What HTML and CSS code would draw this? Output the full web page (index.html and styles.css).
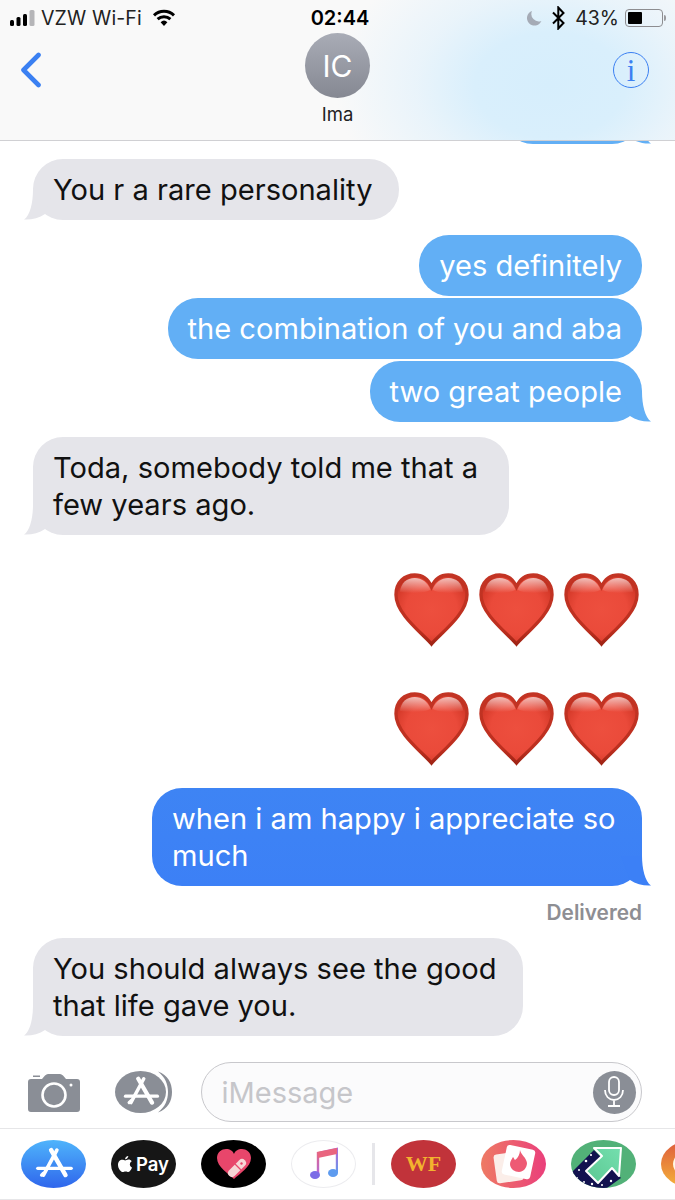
FILE: index.html
```html
<!DOCTYPE html>
<html lang="en">
<head>
<meta charset="utf-8">
<title>Messages</title>
<link rel="stylesheet" href="styles.css">
</head>
<body>
<svg class="defs" width="0" height="0" aria-hidden="true">
  <defs>
    <radialGradient id="hf" cx="50%" cy="50%" r="58%">
      <stop offset="0" stop-color="#ed4f3e"/><stop offset=".62" stop-color="#ea4a3a"/><stop offset=".9" stop-color="#d63a2a"/><stop offset="1" stop-color="#b92c1c"/>
    </radialGradient>
    <linearGradient id="hs" x1="0" y1="0" x2="0" y2="1">
      <stop offset="0" stop-color="#c23424"/><stop offset=".8" stop-color="#bd2f1f"/><stop offset="1" stop-color="#a02415"/>
    </linearGradient>
    <linearGradient id="hh" x1="0" y1="0" x2="0" y2="1">
      <stop offset="0" stop-color="#fff" stop-opacity=".68"/><stop offset="1" stop-color="#fff" stop-opacity="0"/>
    </linearGradient>
    <linearGradient id="mu" x1="0" y1="0" x2="1" y2="1">
      <stop offset="0" stop-color="#e9657f"/><stop offset=".5" stop-color="#b36bd6"/><stop offset="1" stop-color="#5e9bef"/>
    </linearGradient>
    <linearGradient id="mint" x1="1" y1="0" x2="0" y2="1">
      <stop offset="0" stop-color="#74dfae"/><stop offset="1" stop-color="#5cc893"/>
    </linearGradient>
    <symbol id="heart" viewBox="0 0 76 74">
      <path d="M38 72C30 62 2 42 2 22 2 9 11 2 21 2c8 0 14 5 17 12C41 7 47 2 55 2c10 0 19 7 19 20 0 20-28 40-36 50Z" fill="url(#hf)" stroke="url(#hs)" stroke-width="3.400"/>
      <path d="M21 5c7 0 13 4 16 12-6 4-22 4-31 2C7 10 13 5 21 5Z" fill="url(#hh)"/>
      <path d="M55 5c-7 0-13 4-16 12 6 4 22 4 31 2C69 10 63 5 55 5Z" fill="url(#hh)"/>
    </symbol>
    <symbol id="astore" viewBox="0 0 48 36">
      <g fill="none" stroke="#fff" stroke-width="3.800" stroke-linecap="round">
        <path d="M27 3 13 29"/><path d="M21 3 36 29" stroke-width="4.600"/><path d="M7 22h35" stroke-width="3.400"/><path d="M11 29l2-2" stroke-width="3.400"/>
      </g>
    </symbol>
  </defs>
</svg>

<div class="phone">
  <header class="header">
    <div class="status">
      <div class="status-left">
        <svg class="signal" width="26" height="16" viewBox="0 0 26 16"><rect x="0" y="10" width="4" height="6" rx="1.500" fill="#000"/><rect x="6.500" y="7" width="4" height="9" rx="1.500" fill="#000"/><rect x="13" y="4" width="4" height="12" rx="1.500" fill="#000"/><rect x="19.500" y="0" width="5" height="16" rx="1.500" fill="#b5b5b8"/></svg>
        <span class="carrier">VZW Wi-Fi</span>
        <svg class="wifi" width="24" height="17" viewBox="0 0 24 17"><path d="M12 17 8.600 13.200a5 5 0 0 1 6.800 0Z" fill="#000"/><path d="M5.600 10.200a9.400 9.400 0 0 1 12.800 0M2 6.300a14.600 14.600 0 0 1 20 0" fill="none" stroke="#000" stroke-width="3"/></svg>
      </div>
      <div class="clock">02:44</div>
      <div class="status-right">
        <svg class="moon" width="16" height="16" viewBox="0 0 16 16"><path d="M6 1a7.500 7.500 0 1 0 9.400 10A7.500 7.500 0 0 1 6 1Z" fill="#a5abb6"/></svg>
        <svg class="bt" width="13" height="24" viewBox="0 0 13 24"><path d="M1 6.500 11.500 17 6.300 22.500V1.500L11.500 7 1 17.500" fill="none" stroke="#000" stroke-width="2"/></svg>
        <span class="pct">43%</span>
        <div class="battery"><div class="battery-fill"></div></div>
        <div class="battery-nub"></div>
      </div>
    </div>
    <nav class="nav">
      <svg class="back" width="22" height="36" viewBox="0 0 22 36"><path d="M18.500 3 3.500 18l15 15" fill="none" stroke="#3b80f2" stroke-width="4.600" stroke-linecap="round" stroke-linejoin="round"/></svg>
      <div class="contact">
        <div class="avatar">IC</div>
        <div class="name">Ima</div>
      </div>
      <div class="info"><span class="info-i">i</span></div>
    </nav>
  </header>

  <main class="thread">
    <div class="clip">
      <div class="bubble sent light clipped">
        <svg class="tail tail-r" width="30" height="30" viewBox="0 0 30 30"><path d="M21 0C21 12 24 26 30 29.500 23 30 15 28 9 24L0 0Z"/></svg>
      </div>
    </div>
    <div class="bubble recv gap-lg"><span>You r a rare personality</span>
      <svg class="tail tail-l" width="30" height="30" viewBox="0 0 30 30"><path d="M21 0C21 12 24 26 30 29.500 23 30 15 28 9 24L0 0Z"/></svg>
    </div>
    <div class="bubble sent light gap-lg"><span>yes definitely</span></div>
    <div class="bubble sent light gap-sm"><span>the combination of you and aba</span></div>
    <div class="bubble sent light gap-sm"><span>two great people</span>
      <svg class="tail tail-r" width="30" height="30" viewBox="0 0 30 30"><path d="M21 0C21 12 24 26 30 29.500 23 30 15 28 9 24L0 0Z"/></svg>
    </div>
    <div class="bubble recv wide gap-lg"><span>Toda, somebody told me that a few years ago.</span>
      <svg class="tail tail-l" width="30" height="30" viewBox="0 0 30 30"><path d="M21 0C21 12 24 26 30 29.500 23 30 15 28 9 24L0 0Z"/></svg>
    </div>
    <div class="hearts hearts-first">
      <svg class="heart"><use href="#heart"/></svg><svg class="heart"><use href="#heart"/></svg><svg class="heart"><use href="#heart"/></svg>
    </div>
    <div class="hearts hearts-second">
      <svg class="heart"><use href="#heart"/></svg><svg class="heart"><use href="#heart"/></svg><svg class="heart"><use href="#heart"/></svg>
    </div>
    <div class="bubble sent deep full gap-md"><span>when i am happy i appreciate so much</span>
      <svg class="tail tail-r" width="30" height="30" viewBox="0 0 30 30"><path d="M21 0C21 12 24 26 30 29.500 23 30 15 28 9 24L0 0Z"/></svg>
    </div>
    <div class="delivered">Delivered</div>
    <div class="bubble recv wider gap-rd"><span>You should always see the good that life gave you.</span>
      <svg class="tail tail-l" width="30" height="30" viewBox="0 0 30 30"><path d="M21 0C21 12 24 26 30 29.500 23 30 15 28 9 24L0 0Z"/></svg>
    </div>
  </main>

  <section class="composer">
    <svg class="camera" width="52" height="40" viewBox="0 0 52 40"><path d="M5 3.500h7V5H5Z" fill="#8a8e96"/><path d="M3 7h11l3-3.500c1-1 2-1.500 3-1.500h12c1 0 2 .5 3 1.500L38 7h11c2 0 3 1 3 3v27c0 2-1 3-3 3H3c-2 0-3-1-3-3V10c0-2 1-3 3-3Z" fill="#8a8e96"/><circle cx="26" cy="23" r="11.500" fill="none" stroke="#fff" stroke-width="2.600"/><circle cx="43" cy="13" r="1.500" fill="#fff"/></svg>
    <div class="apps-btn">
      <svg class="apps-arc" width="58" height="42" viewBox="0 0 58 42"><path d="M43 .5C53 4 57 12 57 21 57 30 53 38 43 41.500 50 36 53 29 53 21 53 13 50 6 43 .5Z" fill="#8a8e96"/></svg>
      <div class="apps-disc"><svg width="44" height="33"><use href="#astore"/></svg></div>
    </div>
    <div class="input">
      <span class="placeholder">iMessage</span>
      <div class="mic">
        <svg width="24" height="32" viewBox="0 0 24 32"><rect x="7" y="1" width="10" height="18" rx="5" fill="none" stroke="#fff" stroke-width="1.800"/><path d="M3 14c0 6 4 10 9 10s9-4 9-10M12 24v5M6 30h12" fill="none" stroke="#fff" stroke-width="1.800"/></svg>
      </div>
    </div>
  </section>

  <section class="tray">
    <div class="app app-store"><svg width="46" height="35"><use href="#astore"/></svg></div>
    <div class="app app-pay">
      <svg width="14" height="17" viewBox="0 0 14 17"><path d="M10.300 0c.1 1.300-1.300 3.300-3.200 3.200C7 1.700 8.600.2 10.300 0ZM7.200 4.400c.8 0 1.800-.8 3.300-.8 1.300 0 2.500.7 3.200 1.700-2.700 1.600-2.200 5.300.3 6.300-.6 1.700-2.100 4.400-3.600 4.400-1 0-1.500-.6-2.800-.6s-1.900.6-2.800.6C3 16 0 12.500 0 8.900 0 5.600 2.200 3.700 4.100 3.700c1.300 0 2.400.7 3.100.7Z" fill="#fff"/></svg>
      <span class="pay-text">Pay</span>
    </div>
    <div class="app app-heart">
      <svg width="34" height="30" viewBox="0 0 34 30"><path d="M17 30C12 25 0 18 0 9 0 3 5 0 9 0c4 0 7 2 8 5 1-3 4-5 8-5 4 0 9 3 9 9 0 9-12 16-17 21Z" fill="#e8466b"/><path d="m15 24 10-10" stroke="#f6d6d6" stroke-width="8" stroke-linecap="round"/><path d="m18 15 6 6" stroke="#e8466b" stroke-width="1.200"/><circle cx="24.500" cy="14.500" r="1.200" fill="#e8466b"/></svg>
    </div>
    <div class="app app-music">
      <svg width="28" height="34" viewBox="0 0 28 34"><path d="M8 27V6l19-4v24" fill="none" stroke="url(#mu)" stroke-width="2.400"/><path d="M8 5 27 1v6L8 11Z" fill="#e9657f"/><ellipse cx="5" cy="28" rx="5" ry="4" fill="#7c6de6"/><ellipse cx="23" cy="26" rx="5" ry="4" fill="#5e9bef"/></svg>
    </div>
    <div class="divider"></div>
    <div class="app app-wf"><span class="wf-text">WF</span></div>
    <div class="app app-tinder">
      <svg width="54" height="44" viewBox="0 0 54 44"><rect x="8" y="11" width="27" height="29" rx="3" fill="#fbeee9" transform="rotate(-8 21 25)"/><rect x="17" y="5" width="29" height="30" rx="3" fill="#fff" transform="rotate(12 31 20)"/><path d="M33 8c1 5 6 7 7 13 0 5-4 9-8 9s-9-3-9-8c0-3 2-5 3-7 1 1 1 2 2 3 3-2 5-6 5-10Z" fill="#ee5a74"/></svg>
    </div>
    <div class="app app-green">
      <svg width="65" height="48" viewBox="0 0 65 48"><path d="M0 33 23 10 50 38 36 48H0Z" fill="#12124f"/><path d="M50 8H23l8 8-16 15 12 12 14-15 7 8Z" fill="url(#mint)" stroke="#fff" stroke-width="2" stroke-linejoin="round"/><g fill="#fff"><circle cx="15" cy="21" r="1.300"/><circle cx="20" cy="15" r="1.100"/><circle cx="8" cy="30" r="1"/><circle cx="6" cy="38" r="1"/><circle cx="13" cy="42" r="1"/><circle cx="21" cy="44" r="1.200"/><circle cx="31" cy="45" r="1"/><circle cx="40" cy="41" r="1.200"/></g></svg>
    </div>
    <div class="app app-next"><div class="next-hole"></div></div>
  </section>
</div>
</body>
</html>
```

FILE: styles.css
```css
* { box-sizing: border-box; }
html, body { margin: 0; padding: 0; background: #fff; }
body { font-family: "Inter", "Liberation Sans", sans-serif; color: #000; }
.defs { position: absolute; }
.phone { width: 675px; height: 1200px; display: flex; flex-direction: column; overflow: hidden; background: #fff; }

/* Header */
.header {
  height: 141px; flex: none; border-bottom: 1px solid #d0d0d3;
  background:
    radial-gradient(ellipse 215px 150px at 550px 85px, #d6eefc 0%, #d9effc 35%, rgba(228,242,251,.75) 62%, rgba(249,249,249,0) 100%),
    #f9f9f9;
  display: flex; flex-direction: column;
}
.status { height: 33px; flex: none; display: grid; grid-template-columns: 1fr auto 1fr; align-items: center; padding: 2px 5px 0 10px; font-size: 19.500px; }
.status-left { display: flex; align-items: center; }
.carrier { margin-left: 5px; color: #222; letter-spacing: .15px; }
.wifi { margin-left: 10px; }
.clock { font-weight: 600; font-size: 20px; }
.status-right { display: flex; align-items: center; justify-content: flex-end; margin-right: 4px; }
.moon { margin-right: 10px; }
.bt { margin-right: 10px; }
.pct { color: #222; }
.battery { margin-left: 6px; width: 38px; height: 18px; border: 1.500px solid #8d8d90; border-radius: 4px; padding: 2px; }
.battery-fill { width: 43%; height: 100%; background: #000; border-radius: 1px; }
.battery-nub { width: 2px; height: 6px; background: #9a9a9d; border-radius: 0 2px 2px 0; margin-left: 1px; }

.nav { flex: 1; display: grid; grid-template-columns: 1fr auto 1fr; padding: 0 20px; }
.back { margin-top: 19px; }
.contact { display: flex; flex-direction: column; align-items: center; }
.avatar { width: 65px; height: 65px; border-radius: 50%; background: linear-gradient(#a9acb6, #858892); color: #fff; font-size: 30px; font-weight: 400; display: flex; align-items: center; justify-content: center; }
.name { margin-top: 4px; font-size: 18.500px; line-height: 24px; color: #222; }
.info { justify-self: end; margin: 19px 6px 0 0; width: 36px; height: 36px; border: 1.500px solid #3b80f2; border-radius: 50%; display: flex; align-items: center; justify-content: center; }
.info-i { font-family: "Liberation Serif", serif; font-size: 31px; line-height: 1; color: #3b80f2; }

/* Thread */
.thread { flex: 1; display: flex; flex-direction: column; padding: 0 33px; min-height: 0; }
.clip { height: 3px; flex: none; position: relative; display: flex; justify-content: flex-end; overflow: hidden; margin-right: -33px; padding-right: 33px; }
.clipped { width: 139px; height: 61px; margin-top: -58px; flex: none; }
.bubble { position: relative; padding: 12px 20px; border-radius: 30px; font-size: 29.100px; line-height: 37px; max-width: 490px; flex: none; }
.bubble > span { position: relative; z-index: 1; }
.recv { align-self: flex-start; background: #e5e5ea; color: #111; fill: #e5e5ea; padding-right: 26px; }
.sent { align-self: flex-end; color: #fff; }
.light { background: #62aff5; fill: #62aff5; }
.deep { background: linear-gradient(#3e84f4, #3c80f6); fill: #3c80f6; }
.wide { width: 476px; }
.wider { width: 490px; padding-right: 20px; }
.full { width: 490px; }
.gap-lg { margin-top: 15px; }
.gap-sm { margin-top: 2px; }
.gap-md { margin-top: 22px; }
.gap-rd { margin-top: 14px; }
.tail { position: absolute; bottom: 0; }
.tail-r { right: -9px; }
.tail-l { left: -9px; transform: scaleX(-1); }
.hearts { align-self: flex-end; display: flex; gap: 10px; margin-right: 3px; }
.hearts-first { margin-top: 37px; }
.hearts-second { margin-top: 44px; }
.heart { width: 75px; height: 75px; }
.delivered { align-self: flex-end; margin-top: 15px; font-size: 20.800px; line-height: 23px; font-weight: 600; color: #8e8e93; }

/* Composer */
.composer { flex: none; height: 67px; padding: 0 33px 6px 28px; display: flex; align-items: center; border-bottom: 1px solid #e6e6e8; }
.camera { flex: none; }
.apps-btn { position: relative; margin-left: 35px; width: 58px; height: 42px; flex: none; }
.apps-arc { position: absolute; left: 0; top: 0; }
.apps-disc { width: 51px; height: 42px; border-radius: 50%; background: #8a8e96; display: flex; align-items: center; justify-content: center; }
.input { margin-left: 28px; flex: 1; height: 60px; border: 1.500px solid #c8c8cc; border-radius: 30px; background: #fbfbfc; display: flex; align-items: center; justify-content: space-between; padding: 0 5.500px 0 19.500px; }
.placeholder { font-size: 29px; color: #c6c6ca; }
.mic { width: 43px; height: 43px; border-radius: 50%; background: #8a8e96; display: flex; align-items: center; justify-content: center; }

/* App tray */
.tray { flex: none; height: 71px; border-bottom: 1px solid #e6e6e8; background: #fff; display: flex; align-items: center; gap: 25px; padding: 0 0 0 21px; overflow: hidden; }
.app { width: 65px; height: 48px; flex: none; border-radius: 50%; display: flex; align-items: center; justify-content: center; overflow: hidden; }
.app-store { background: linear-gradient(#4fb4fb, #2f66ec); }
.app-pay { background: #161616; color: #fff; gap: 4px; }
.pay-text { font-size: 18.500px; font-weight: 600; }
.app-heart { background: #000; }
.app-music { background: #fff; border: 1px solid #ececef; }
.divider { width: 3px; height: 42px; background: #e6e6ea; margin: 0 -9px; flex: none; }
.app-wf { background: #c1333a; }
.wf-text { font-family: "Liberation Serif", serif; font-weight: 700; font-size: 22px; color: #f3b32e; }
.app-tinder { background: linear-gradient(90deg, #ee7a64, #ea3f7b); }
.app-green { background: #52b178; }
.app-next { background: linear-gradient(#dd5a3c, #f5b33a); }
.next-hole { width: 42px; height: 30px; border-radius: 50%; background: #fff8e5; }
```
